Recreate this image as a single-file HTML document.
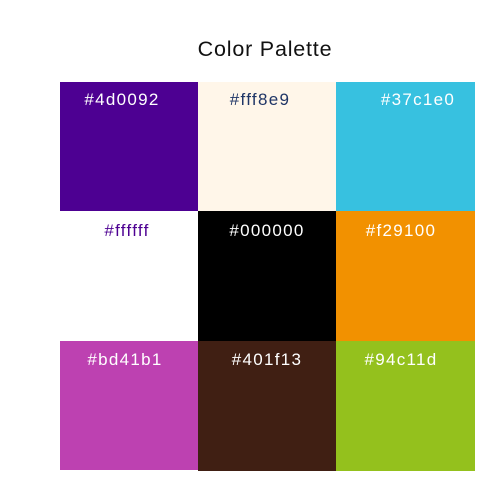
<!DOCTYPE html>
<html><head><style>
body{margin:0;width:500px;height:500px;background:#fff;position:relative;font-family:"Liberation Sans",sans-serif;overflow:hidden}
.t{position:absolute;left:0;width:500px;text-align:center;top:37px;font-size:21.5px;letter-spacing:0.8px;color:#111;padding-left:30px;box-sizing:border-box}
.c{position:absolute}
.l{position:absolute;width:140px;margin-left:-70px;text-align:center;font-size:17px;letter-spacing:1.3px;line-height:20px}
</style></head><body>
<div class="t">Color Palette</div>
<div class="c" style="left:60px;top:82px;width:138px;height:129px;background:#4d0092"></div>
<div class="c" style="left:198px;top:82px;width:138px;height:129px;background:#fff6e9"></div>
<div class="c" style="left:336px;top:82px;width:139px;height:129px;background:#37c1e0"></div>
<div class="c" style="left:198px;top:211px;width:138px;height:130px;background:#000"></div>
<div class="c" style="left:336px;top:211px;width:139px;height:130px;background:#f29100"></div>
<div class="c" style="left:60px;top:341px;width:138px;height:129px;background:#bd41b1"></div>
<div class="c" style="left:198px;top:341px;width:138px;height:130px;background:#401f13"></div>
<div class="c" style="left:336px;top:341px;width:139px;height:130px;background:#94c11d"></div>
<div class="l" style="left:122px;top:90px;color:#fff">#4d0092</div>
<div class="l" style="left:260px;top:90px;color:#1f3566">#fff8e9</div>
<div class="l" style="left:418px;top:90px;color:#fff">#37c1e0</div>
<div class="l" style="left:127px;top:221px;color:#4d0092">#ffffff</div>
<div class="l" style="left:267px;top:221px;color:#fff">#000000</div>
<div class="l" style="left:401px;top:221px;color:#fff">#f29100</div>
<div class="l" style="left:125px;top:350px;color:#fff">#bd41b1</div>
<div class="l" style="left:267px;top:350px;color:#fff">#401f13</div>
<div class="l" style="left:401px;top:350px;color:#fff">#94c11d</div>
</body></html>
